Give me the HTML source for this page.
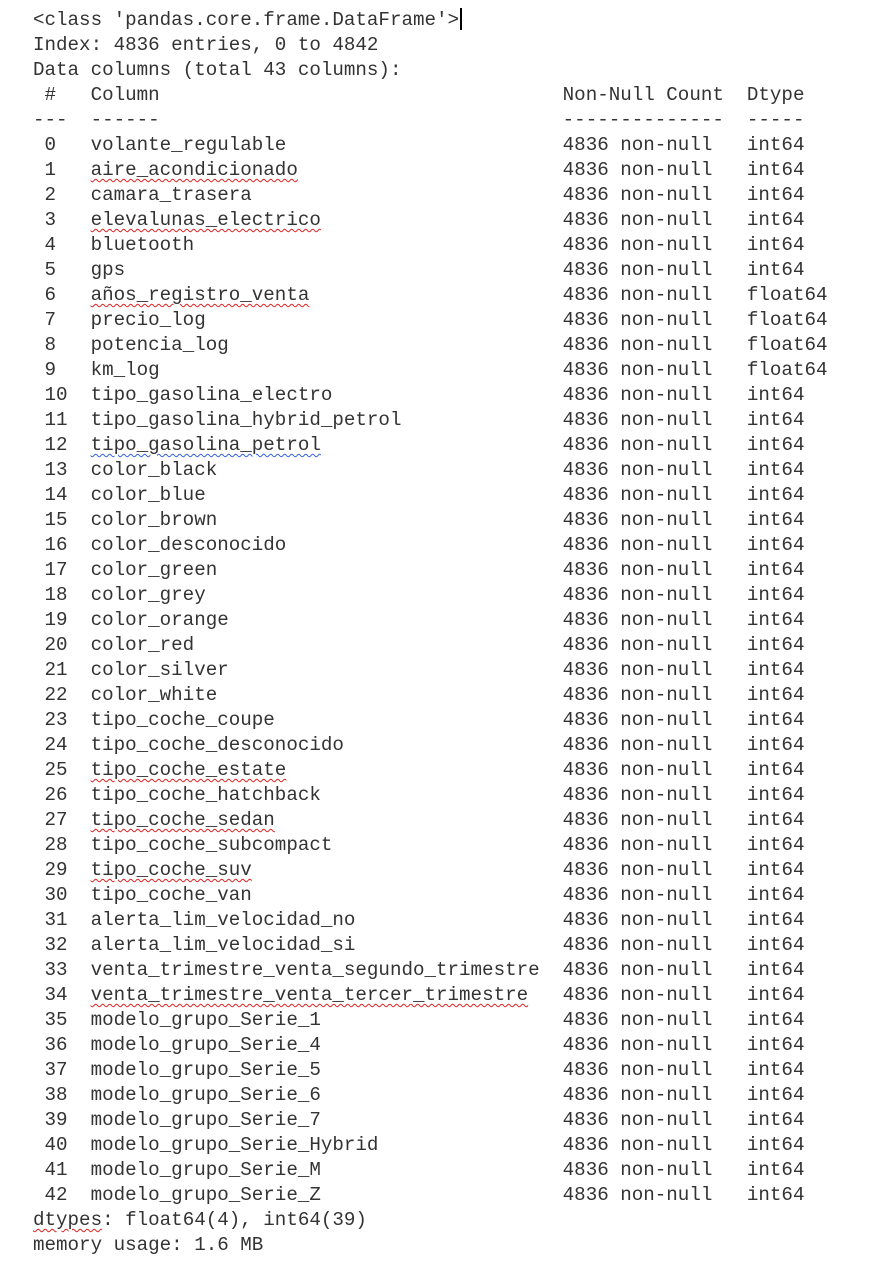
<!DOCTYPE html>
<html><head><meta charset="utf-8"><style>
body{margin:0;background:#fff;width:876px;height:1282px;overflow:hidden}
pre{position:absolute;left:33px;top:8px;margin:0;font-family:"Liberation Mono",monospace;font-size:19.2px;line-height:25px;color:#333}
.w{text-decoration:underline wavy #e02020;text-decoration-thickness:1px;text-underline-offset:3px}
.b{text-decoration:underline wavy #3060e0;text-decoration-thickness:1px;text-underline-offset:3px}
.c{display:inline-block;width:2px;height:22px;background:#000;vertical-align:-5px;margin-left:1px}
</style></head><body><pre>&lt;class 'pandas.core.frame.DataFrame'&gt;<span class="c"></span>
Index: 4836 entries, 0 to 4842
Data columns (total 43 columns):
 #   Column                                   Non-Null Count  Dtype  
---  ------                                   --------------  -----  
 0   volante_regulable                        4836 non-null   int64  
 1   <span class="w">aire_acondicionado</span>                       4836 non-null   int64  
 2   camara_trasera                           4836 non-null   int64  
 3   <span class="w">elevalunas_electrico</span>                     4836 non-null   int64  
 4   bluetooth                                4836 non-null   int64  
 5   gps                                      4836 non-null   int64  
 6   <span class="w">años_registro_venta</span>                      4836 non-null   float64
 7   precio_log                               4836 non-null   float64
 8   potencia_log                             4836 non-null   float64
 9   km_log                                   4836 non-null   float64
 10  tipo_gasolina_electro                    4836 non-null   int64  
 11  tipo_gasolina_hybrid_petrol              4836 non-null   int64  
 12  <span class="b">tipo_gasolina_petrol</span>                     4836 non-null   int64  
 13  color_black                              4836 non-null   int64  
 14  color_blue                               4836 non-null   int64  
 15  color_brown                              4836 non-null   int64  
 16  color_desconocido                        4836 non-null   int64  
 17  color_green                              4836 non-null   int64  
 18  color_grey                               4836 non-null   int64  
 19  color_orange                             4836 non-null   int64  
 20  color_red                                4836 non-null   int64  
 21  color_silver                             4836 non-null   int64  
 22  color_white                              4836 non-null   int64  
 23  tipo_coche_coupe                         4836 non-null   int64  
 24  tipo_coche_desconocido                   4836 non-null   int64  
 25  <span class="w">tipo_coche_estate</span>                        4836 non-null   int64  
 26  tipo_coche_hatchback                     4836 non-null   int64  
 27  <span class="w">tipo_coche_sedan</span>                         4836 non-null   int64  
 28  tipo_coche_subcompact                    4836 non-null   int64  
 29  <span class="w">tipo_coche_suv</span>                           4836 non-null   int64  
 30  tipo_coche_van                           4836 non-null   int64  
 31  alerta_lim_velocidad_no                  4836 non-null   int64  
 32  alerta_lim_velocidad_si                  4836 non-null   int64  
 33  venta_trimestre_venta_segundo_trimestre  4836 non-null   int64  
 34  <span class="w">venta_trimestre_venta_tercer_trimestre</span>   4836 non-null   int64  
 35  modelo_grupo_Serie_1                     4836 non-null   int64  
 36  modelo_grupo_Serie_4                     4836 non-null   int64  
 37  modelo_grupo_Serie_5                     4836 non-null   int64  
 38  modelo_grupo_Serie_6                     4836 non-null   int64  
 39  modelo_grupo_Serie_7                     4836 non-null   int64  
 40  modelo_grupo_Serie_Hybrid                4836 non-null   int64  
 41  modelo_grupo_Serie_M                     4836 non-null   int64  
 42  modelo_grupo_Serie_Z                     4836 non-null   int64  
<span class="w">dtypes</span>: float64(4), int64(39)
memory usage: 1.6 MB</pre></body></html>
